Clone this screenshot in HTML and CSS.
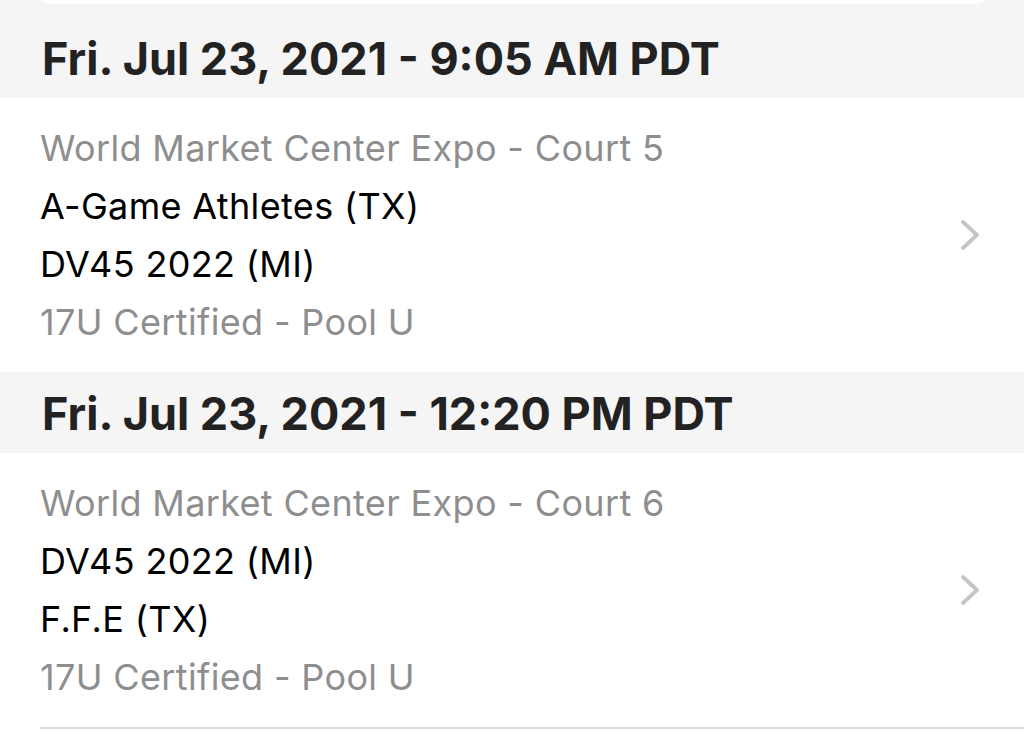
FILE: index.html
```html
<!DOCTYPE html>
<html lang="en">
<head>
<meta charset="utf-8">
<title>Schedule</title>
<link rel="stylesheet" href="styles.css">
</head>
<body>
<div class="top">
  <div class="prev-card"></div>
</div>
<section class="day">
  <h2 class="day-header">Fri. Jul 23, 2021 - 9:05 AM PDT</h2>
  <a class="match">
    <div class="match-text">
      <div class="line muted">World Market Center Expo - Court 5</div>
      <div class="line">A-Game Athletes (TX)</div>
      <div class="line">DV45 2022 (MI)</div>
      <div class="line muted">17U Certified - Pool U</div>
    </div>
    <svg class="chev" width="20" height="32" viewBox="0 0 20 32"><path d="M3 3 L17 16 L3 29" fill="none" stroke="#c5c5c8" stroke-width="3.8" stroke-linecap="round" stroke-linejoin="round"/></svg>
  </a>
</section>
<section class="day">
  <h2 class="day-header">Fri. Jul 23, 2021 - 12:20 PM PDT</h2>
  <a class="match last">
    <div class="match-text">
      <div class="line muted">World Market Center Expo - Court 6</div>
      <div class="line">DV45 2022 (MI)</div>
      <div class="line">F.F.E (TX)</div>
      <div class="line muted">17U Certified - Pool U</div>
    </div>
    <svg class="chev" width="20" height="32" viewBox="0 0 20 32"><path d="M3 3 L17 16 L3 29" fill="none" stroke="#c5c5c8" stroke-width="3.8" stroke-linecap="round" stroke-linejoin="round"/></svg>
  </a>
</section>
</body>
</html>
```
FILE: styles.css
```css
html, body {
  margin: 0;
  padding: 0;
  background: #ffffff;
  font-family: Inter, "Liberation Sans", sans-serif;
}
.top {
  background: #f5f5f5;
  height: 17px;
  overflow: hidden;
}
.prev-card {
  margin: -20px 32px 0 33px;
  height: 24px;
  background: #ffffff;
  border-radius: 0 0 18px 18px;
}
.day-header {
  margin: 0;
  height: 81px;
  display: flex;
  align-items: center;
  padding: 2px 0 0 42px;
  box-sizing: border-box;
  background: #f5f5f5;
  font-size: 45px;
  font-weight: 700;
  color: #222222;
  letter-spacing: 0;
}
.match {
  display: flex;
  align-items: center;
  padding: 21px 44px 21px 40px;
  background: #ffffff;
}
.match.last {
  border-bottom: 2px solid #d9d9d9;
  margin-left: 40px;
  padding-left: 0;
}
.match-text {
  flex: 1;
}
.line {
  font-size: 36px;
  line-height: 58px;
  letter-spacing: 0.35px;
  color: #000000;
}
.line.muted {
  color: #8e8e8e;
}
.chev {
  display: block;
}
```
